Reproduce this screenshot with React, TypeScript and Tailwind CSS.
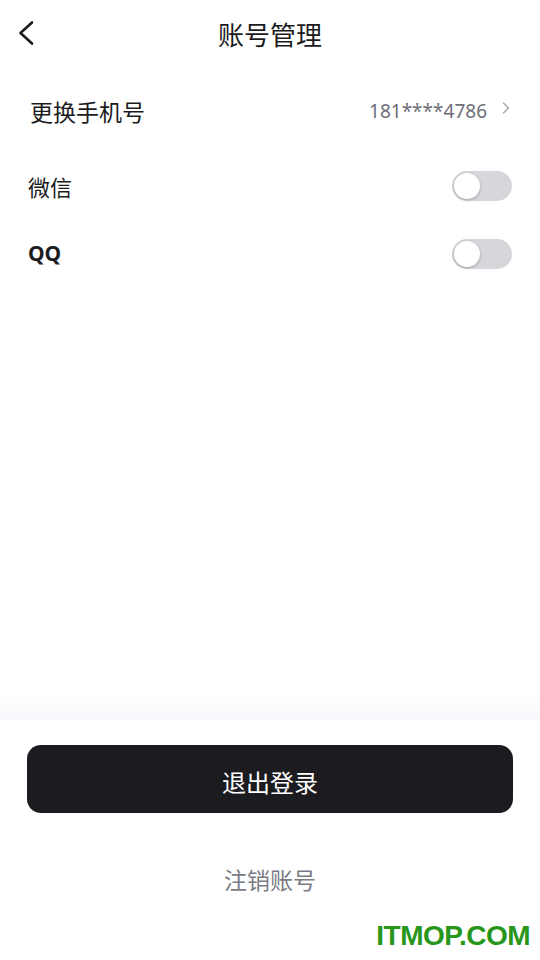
import React from 'react';

const Toggle: React.FC = () => (
  <div className="w-[60px] h-[30px] rounded-full bg-[#d6d6db] p-[2px] flex items-center">
    <div className="w-[26px] h-[26px] rounded-full bg-white shadow-[0_1px_3px_rgba(0,0,0,0.25)]"></div>
  </div>
);

export default function App() {
  return (
    <div className="w-[540px] h-[960px] bg-white flex flex-col text-[#1c1c1e]" style={{ fontFamily: '"Noto Sans CJK SC", "Noto Sans", sans-serif' }}>
      {/* Header */}
      <div className="h-[70px] relative flex items-center justify-center">
        <svg className="absolute left-[16px] top-[20px]" width="20" height="26" viewBox="0 0 20 26" fill="none">
          <path d="M16 2.5 L4.5 13 L16 23.5" stroke="#1c1c1e" strokeWidth="2.6" strokeLinecap="round" strokeLinejoin="round" />
        </svg>
        <h1 className="text-[26px] leading-none text-[#1c1c1e] -mt-[2px]">账号管理</h1>
      </div>

      {/* Rows */}
      <div className="h-[82px] flex items-center justify-between pl-[30px] pr-[30px]">
        <span className="text-[23px]">更换手机号</span>
        <div className="flex items-center gap-[15px]">
          <span className="text-[19px] text-[#6e6e78]" style={{ fontFamily: '"Noto Sans", sans-serif' }}>181****4786</span>
          <svg width="8" height="12" viewBox="0 0 8 12" fill="none" className="-mt-[6px]">
            <path d="M1.5 1 L6.5 6 L1.5 11" stroke="#a8a8b0" strokeWidth="1.5" strokeLinecap="round" strokeLinejoin="round" />
          </svg>
        </div>
      </div>
      <div className="h-[68px] flex items-center justify-between pl-[28px] pr-[28px]">
        <span className="text-[22px]">微信</span>
        <Toggle />
      </div>
      <div className="h-[68px] flex items-center justify-between pl-[28px] pr-[28px]">
        <span className="text-[21px] font-bold" style={{ fontFamily: '"Noto Sans", sans-serif' }}>QQ</span>
        <Toggle />
      </div>

      <div className="flex-1"></div>

      {/* Bottom panel */}
      <div className="h-[24px] bg-gradient-to-b from-white to-[#f7f8fb]"></div>
      <div className="bg-white flex flex-col pt-[25px]">
        <button className="mx-[27px] h-[68px] rounded-[14px] bg-[#1c1b20] text-white text-[24px] flex items-center justify-center pt-[6px]">
          退出登录
        </button>
        <div className="mt-[33px] h-[66px] flex items-center justify-center text-[23px] text-[#7b7b85]">
          注销账号
        </div>
        <div className="h-[48px] flex items-center justify-end pr-[10px]">
          <span className="text-[28px] font-bold text-[#27961b] tracking-[-0.5px]" style={{ fontFamily: '"Liberation Sans", Arial, sans-serif' }}>ITMOP.COM</span>
        </div>
      </div>
    </div>
  );
}
